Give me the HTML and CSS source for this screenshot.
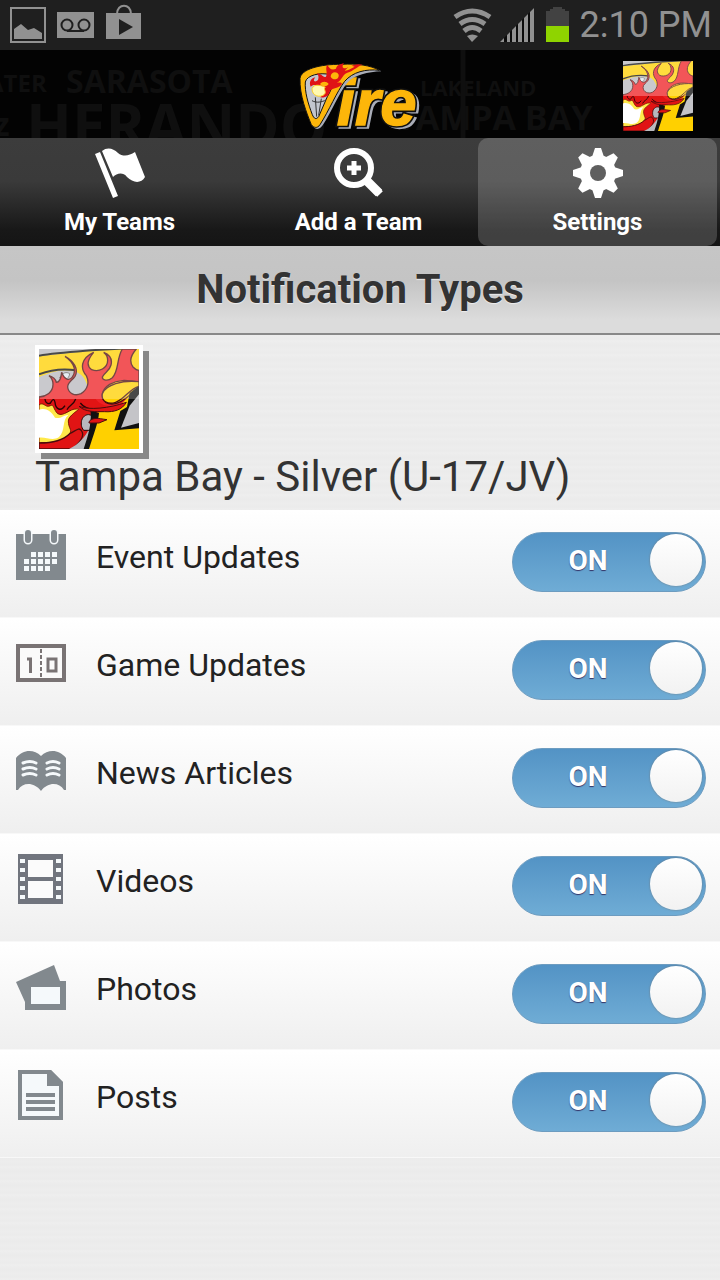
FILE: index.html
```html
<!DOCTYPE html>
<html lang="en">
<head>
    <meta charset="UTF-8">
    <meta name="viewport" content="width=device-width, initial-scale=1.0">
    <title>Notification Types</title>
    <link rel="stylesheet" href="styles.css">
</head>
<body>
    <!-- shared artwork -->
    <svg class="defs" width="0" height="0" aria-hidden="true">
        <symbol id="teamArt" viewBox="0 0 300 300">
            <rect width="300" height="300" fill="#b9b9be"/>
            <path d="M0 22 L150 5 L300 -4 V160 H150 C150 100 135 72 100 66 C60 60 30 72 0 84Z" fill="#ffd000"/>
            <path d="M0 20 C50 12 110 8 170 3 L300 -4 M0 76 C30 64 70 58 112 64" fill="none" stroke="#111" stroke-width="6"/>
            <path d="M62 86 C72 98 90 92 92 74 C82 68 72 70 62 86Z" fill="#dfe8ef" stroke="#333" stroke-width="2"/>
            <path d="M0 160 L0 144 C22 142 42 130 42 106 C42 94 38 86 30 80 C44 84 50 92 52 100 C60 100 66 92 68 70 C76 94 92 96 100 84 C112 68 108 42 78 22 C104 36 120 60 108 82 C98 96 86 100 86 114 C88 134 108 142 126 134 C146 122 152 100 142 80 C124 60 124 28 164 10 C144 34 142 50 158 62 C180 70 206 58 206 34 C206 22 200 14 194 10 C214 18 220 32 216 48 C212 66 196 70 190 84 C190 94 206 98 220 86 C240 66 232 30 250 0 L292 0 C276 18 270 38 282 54 C290 62 296 64 300 64 L300 100 C260 92 236 92 212 106 C184 124 186 146 200 160 C220 172 250 160 280 132 C272 160 250 184 216 188 C190 190 160 180 140 188 L130 172Z" fill="#ee2024" stroke="#4a0d0d" stroke-width="4"/>
            <path d="M300 98 C250 92 200 108 190 134 C186 156 206 168 230 160 C258 150 270 120 300 112Z" fill="#ffd000" stroke="#4a0d0d" stroke-width="4"/>
            <path d="M0 150 H170 C180 164 200 174 230 172 L170 210 L140 300 H0Z" fill="#e11414"/>
            <path d="M18 150 C20 166 34 168 38 156 C42 150 46 150 48 160 C50 182 66 188 78 170 M110 150 C104 168 90 168 84 182 M124 162 C134 176 150 182 174 184" fill="none" stroke="#2a0505" stroke-width="4"/>
            <path d="M0 168 C14 156 18 178 34 170 C44 164 44 182 56 194 C74 204 94 178 112 180 C136 176 88 196 88 216 C88 240 104 244 88 258 C60 292 24 276 0 282Z" fill="#ffe94a" stroke="#7c1600" stroke-width="3"/>
            <path d="M0 182 C20 176 36 186 48 206 C62 212 78 196 88 198 C68 214 80 246 60 264 C40 278 20 262 0 266Z" fill="#fff"/>
            <path d="M0 282 C30 282 70 276 92 254 C110 246 120 232 128 246 C138 262 122 280 100 300 H0Z" fill="#e11414" stroke="#4a0d0d" stroke-width="4"/>
            <path d="M90 300 C120 286 140 262 150 240 L158 196 L170 204 L144 300Z" fill="#b9b9be"/>
            <path d="M128 214 C132 200 146 192 158 200 L154 244 H134 C126 234 126 224 128 214Z" fill="#b9b9be" stroke="#2a0505" stroke-width="3"/>
            <path d="M300 112 L236 176 L170 192 L136 300 H300Z" fill="#ffd000"/>
            <path d="M154 184 C160 216 148 260 134 300 H150 C162 262 178 220 180 192Z" fill="#111"/>
            <path d="M272 132 L300 110 V238 L226 244 L244 186 L264 174Z" fill="#111"/>
            <path d="M300 136 L272 170 L246 236 L300 222Z" fill="#c4c4c8"/>
            <path d="M120 172 C150 184 210 178 262 160 C250 182 226 190 196 188 C170 188 140 190 120 172Z" fill="#e11414" stroke="#4a0d0d" stroke-width="3"/>
            <path d="M150 218 C162 204 176 208 204 212 L180 222 L150 222Z" fill="#e11414" stroke="#4a0d0d" stroke-width="3"/>
            <rect width="300" height="150" fill="#fff" opacity=".24"/>
        </symbol>
    </svg>

    <div class="statusBar">
        <svg class="statusIcons" width="150" height="50" viewBox="0 0 150 50" aria-hidden="true">
            <rect x="11" y="8" width="34" height="34" fill="none" stroke="#919191" stroke-width="2"/>
            <path d="M14 39 V29 L21 24 L28 30 L34 28 L42 33 V39Z" fill="#919191"/>
            <rect x="57" y="12" width="37" height="26" fill="#919191"/>
            <g fill="none" stroke="#1f1f1f" stroke-width="2">
                <circle cx="67" cy="25" r="5.500"/>
                <circle cx="84" cy="25" r="5.500"/>
                <path d="M67 31 H84"/>
            </g>
            <rect x="106" y="13" width="35" height="26" fill="#919191"/>
            <path d="M117 14 C117 3 131 3 131 14" fill="none" stroke="#919191" stroke-width="2"/>
            <path d="M119 19 L133 27 L119 35Z" fill="#1f1f1f"/>
        </svg>
        <div class="statusRight">
            <svg width="120" height="50" viewBox="450 0 120 50" aria-hidden="true">
                <g fill="none" stroke="#919191" stroke-width="5">
                    <path d="M455 17 Q472 5 490 17"/>
                    <path d="M460 24 Q472 15 485 24"/>
                    <path d="M464 31 Q472 24 481 31"/>
                </g>
                <path d="M467 36 Q472 33 478 36 L472 42Z" fill="#919191"/>
                <path d="M500 42 L534 8 V42Z" fill="#0b0b0b"/>
                <path d="M500 42 L504 38 V42Z M507 35 L510 32 V42 H507Z M512 30 L516 26 V42 H512Z M518 24 L522 20 V42 H518Z M524 18 L528 14 V42 H524Z M530 12 L534 8 V42 H530Z" fill="#919191"/>
                <path d="M546 11 H550 V9 H553 V7 H562 V9 H565 V11 H569 V26 H546Z" fill="#424242"/>
                <rect x="546" y="26" width="23" height="16" fill="#8fd400"/>
            </svg>
            <span class="clock">2:10 PM</span>
        </div>
    </div>

    <header class="banner">
        <!-- city names fading into the background -->
        <svg class="cities" viewBox="0 0 720 88" preserveAspectRatio="xMidYMid slice" aria-hidden="true">
            <g fill="#0f0f0f" font-family="Open Sans, sans-serif" font-weight="bold">
                <text x="-13" y="42" font-size="24">ATER</text>
                <text x="66" y="43" font-size="32">SARASOTA</text>
                <text x="-6" y="86" font-size="32">z</text>
                <text x="26" y="98" font-size="60">HERANDO</text>
                <text x="420" y="46" font-size="22">LAKELAND</text>
                <text x="396" y="80" font-size="34">TAMPA BAY</text>
            </g>
            <path d="M463 0 V88" stroke="#0f0f0f" stroke-width="5"/>
        </svg>
        <svg class="logo" width="124" height="68" viewBox="174 36 372 204" role="img" aria-label="Vire">
            <g font-family="Liberation Sans, sans-serif" font-size="196" font-weight="bold" font-style="italic">
                <text x="298" y="232" fill="#a9adb8" stroke="#a9adb8" stroke-width="10">ire</text>
                <text x="290" y="226" fill="none" stroke="#111" stroke-width="14">ire</text>
                <text x="290" y="226" fill="#fdb60a" stroke="#fdb60a" stroke-width="4">ire</text>
            </g>
            <path d="M186 90 C188 60 240 46 310 46 C360 42 400 50 424 64 C384 66 344 74 322 98 C296 130 276 184 248 226 C238 240 228 240 218 228 C204 190 184 134 186 90Z" fill="#a9adb8"/>
            <path d="M180 86 C182 58 240 42 304 43 C352 40 392 46 418 61 C378 56 338 66 314 94 C290 126 268 180 240 224 C232 236 222 234 214 224 C200 190 178 134 180 86Z" fill="#fdb60a" stroke="#111" stroke-width="3"/>
            <path d="M196 96 C200 76 240 66 270 74 C284 88 280 110 262 140 L236 200 C228 210 222 206 217 194 C204 160 194 126 196 96Z" fill="#c3c6ce" stroke="#111" stroke-width="3"/>
            <path d="M212 110 C206 98 212 84 226 82 C216 94 226 98 234 90 C238 80 234 74 230 70 C246 70 248 84 258 80 C264 66 254 56 262 44 C268 56 276 62 288 56 C290 46 300 42 312 40 C304 50 308 58 320 54 C340 44 350 40 368 44 C350 50 342 62 322 68 C304 76 308 90 290 98 C300 98 304 96 306 102 C294 118 280 112 270 122 C268 136 258 144 240 142 C252 132 248 120 236 110 C226 102 218 104 212 110Z" fill="#e01216"/>
            <path d="M272 80 C272 66 290 62 296 74 C298 88 280 94 272 80Z M314 62 C326 62 334 54 344 50 L330 46Z M240 102 C248 92 260 94 266 102 C260 110 248 112 240 102Z" fill="#fdb60a"/>
            <path d="M216 116 C222 100 244 106 256 112 C248 116 262 126 252 134 C238 144 216 138 216 116Z" fill="#fff9b0" stroke="#fdd12a" stroke-width="3"/>
            <path d="M216 152 C230 160 246 156 258 150 M226 142 L230 200 M244 146 L236 196" fill="none" stroke="#333" stroke-width="3"/>
        </svg>
        <svg class="avatar" width="70" height="70" role="img" aria-label="Team picture"><use href="#teamArt"/></svg>
    </header>

    <nav class="tabs">
        <a href="#teams" class="tab">
            <svg width="50" height="50" viewBox="0 0 50 50" aria-hidden="true">
                <path d="M0 6 L5 4 L23 48 L18 50Z M7 3 C12 -1 18 0 23 5 C28 9 34 8 40 4 L50 29 C46 36 38 35 32 29 C28 24 22 25 18 29Z" fill="#fff"/>
            </svg>
            <span>My Teams</span>
        </a>
        <a href="#add" class="tab">
            <svg width="50" height="50" viewBox="0 0 50 50" aria-hidden="true">
                <circle cx="20" cy="20" r="17" fill="none" stroke="#fff" stroke-width="6"/>
                <path d="M20 13 V27 M13 20 H27" stroke="#fff" stroke-width="5"/>
                <path d="M32 32 L45 45" stroke="#fff" stroke-width="9"/>
                <path d="M42 42 L46 46" stroke="#fff" stroke-width="8" stroke-linejoin="round"/>
            </svg>
            <span>Add a Team</span>
        </a>
        <a href="#settings" class="tab active" aria-current="page">
            <svg width="50" height="50" viewBox="-25 -25 50 50" aria-hidden="true">
                <g fill="#fff">
                    <path id="tooth" d="M-6 -16 L-3 -25 H3 L6 -16 V16 L3 25 H-3 L-6 16Z"/>
                    <use href="#tooth" transform="rotate(45)"/>
                    <use href="#tooth" transform="rotate(90)"/>
                    <use href="#tooth" transform="rotate(135)"/>
                    <circle r="18"/>
                </g>
                <circle r="8" fill="#5f5f5f"/>
            </svg>
            <span>Settings</span>
        </a>
    </nav>

    <h1 class="pageTitle">Notification Types</h1>

    <main>
        <section class="team">
            <svg class="teamPic" width="108" height="108" role="img" aria-label="Team picture"><use href="#teamArt"/></svg>
            <h2>Tampa Bay - Silver (U-17/JV)</h2>
        </section>

        <ul class="types">
            <li class="type">
                <svg width="50" height="50" viewBox="0 0 50 50" aria-hidden="true">
                    <path d="M0 4 H50 V50 H0Z" fill="#82898e"/>
                    <g fill="none" stroke-linecap="round">
                        <path d="M12 3 V10 M38 3 V10" stroke="#f5f9fb" stroke-width="9"/>
                        <path d="M12 3 V10 M38 3 V10" stroke="#82898e" stroke-width="6"/>
                    </g>
                    <path d="M15 24.500 H41 M8 31.500 H41 M8 38.500 H34" stroke="#f5f9fb" stroke-width="5" stroke-dasharray="5 2"/>
                </svg>
                <label for="events">Event Updates</label>
                <div class="toggle"><input type="checkbox" id="events" checked><span>ON</span></div>
            </li>
            <li class="type">
                <svg width="50" height="50" viewBox="0 0 50 50" aria-hidden="true">
                    <rect x="2" y="8" width="46" height="34" fill="#fafafa" stroke="#797374" stroke-width="4"/>
                    <path d="M25 11 V41" stroke="#797374" stroke-width="2" stroke-dasharray="4 2"/>
                    <path d="M11 21 H14.500 V35" fill="none" stroke="#797374" stroke-width="3"/>
                    <rect x="32" y="21" width="8" height="12" fill="none" stroke="#797374" stroke-width="3"/>
                </svg>
                <label for="games">Game Updates</label>
                <div class="toggle"><input type="checkbox" id="games" checked><span>ON</span></div>
            </li>
            <li class="type">
                <svg width="50" height="50" viewBox="0 0 50 50" aria-hidden="true">
                    <path d="M0 12 C7 3 18 3 25 10 C32 3 43 3 50 12 V44 H48 C43 36 32 36 25 45 C18 36 7 36 2 44 H0Z" fill="#82898e"/>
                    <path d="M7 17 Q14 14 20 17 M7 23 Q14 20 20 23 M7 29 Q14 26 20 29 M31 17 Q37 14 43 17 M31 23 Q37 20 43 23 M31 29 Q37 26 43 29" fill="none" stroke="#f5f9fb" stroke-width="3" stroke-linecap="round"/>
                </svg>
                <label for="news">News Articles</label>
                <div class="toggle"><input type="checkbox" id="news" checked><span>ON</span></div>
            </li>
            <li class="type">
                <svg width="50" height="50" viewBox="0 0 50 50" aria-hidden="true">
                    <path d="M2 0 H47 V50 H2Z" fill="#71757e"/>
                    <path d="M12 6 H37 V23 H12Z M12 27 H37 V44 H12Z" fill="#fbfbfb"/>
                    <path d="M6.500 5 V45 M42.500 5 V45" stroke="#f5f9fb" stroke-width="5" stroke-dasharray="4 5"/>
                </svg>
                <label for="videos">Videos</label>
                <div class="toggle"><input type="checkbox" id="videos" checked><span>ON</span></div>
            </li>
            <li class="type">
                <svg width="50" height="50" viewBox="0 0 50 50" aria-hidden="true">
                    <path d="M0 20 L38 3 L44 19 H50 V48 H9 V40Z" fill="#82898e"/>
                    <path d="M15 25 H44 V42 H15Z" fill="#f5f9fb"/>
                </svg>
                <label for="photos">Photos</label>
                <div class="toggle"><input type="checkbox" id="photos" checked><span>ON</span></div>
            </li>
            <li class="type">
                <svg width="50" height="50" viewBox="0 0 50 50" aria-hidden="true">
                    <path d="M4 2 H34 L45 13 V48 H4Z" fill="#f5f9fb" stroke="#82898e" stroke-width="4"/>
                    <path d="M31 0 H35 L47 12 V16 H31Z" fill="#82898e"/>
                    <path d="M10 25 H39 M10 32 H39 M10 39 H39" stroke="#82898e" stroke-width="4"/>
                </svg>
                <label for="posts">Posts</label>
                <div class="toggle"><input type="checkbox" id="posts" checked><span>ON</span></div>
            </li>
        </ul>
    </main>
</body>
</html>
```
FILE: styles.css
```css
* {
    margin: 0;
    padding: 0;
    box-sizing: border-box;
}

body {
    min-height: 100vh;
    font-family: Roboto, "Liberation Sans", sans-serif;
    color: #333;
    background: repeating-linear-gradient(#ededed 0px, #ebebeb 3px, #eeeeee 5px, #ebebeb 9px, #ededed 14px);
}

svg {
    display: block;
}

.defs {
    position: absolute;
}

/* phone status bar */
.statusBar {
    display: flex;
    justify-content: space-between;
    align-items: center;
    height: 50px;
    padding-right: 8px;
    background: #1f1f1f;
}

.statusRight {
    display: flex;
    align-items: center;
    gap: 10px;
}

.clock {
    color: #919191;
    font-size: 36px;
    line-height: 50px;
}

/* banner */
.banner {
    position: relative;
    display: grid;
    grid-template-columns: 1fr auto 1fr;
    align-items: center;
    height: 88px;
    padding: 4px 27px 0;
    background: #030303;
}

.cities {
    position: absolute;
    top: 0;
    left: 0;
    width: 100%;
    height: 100%;
}

.logo {
    position: relative;
    grid-column: 2;
}

.avatar {
    position: relative;
    justify-self: end;
}

/* tabs */
.tabs {
    display: grid;
    grid-template-columns: repeat(3, 1fr);
    height: 108px;
    padding-right: 3px;
    background: linear-gradient(#3c3c3c 0%, #3a3a3a 40%, #181818 85%, #151515 100%);
}

.tab {
    display: flex;
    flex-direction: column;
    align-items: center;
    gap: 8px;
    padding-top: 10px;
    color: #fff;
    font-size: 24px;
    font-weight: bold;
    line-height: 32px;
    text-decoration: none;
}

.tab.active {
    background: rgba(255, 255, 255, 0.18);
    border-radius: 10px;
}

.pageTitle {
    height: 89px;
    border-bottom: 2px solid #888;
    background: linear-gradient(#c6c6c6, #c4c4c4 40%, #dcdcdc 85%);
    font-size: 40px;
    line-height: 87px;
    text-align: center;
    text-shadow: 0 1px 1px #eee;
}

.team {
    padding: 10px 35px;
}

.teamPic {
    border: 4px solid #fff;
    box-shadow: 6px 6px 0 #888;
}

.team h2 {
    font-size: 42px;
    font-weight: normal;
    line-height: 47px;
}

/* notification list */
.types {
    list-style: none;
}

.type {
    display: flex;
    align-items: flex-start;
    height: 108px;
    padding: 19px 14px 0 16px;
    border-top: 1px solid #fff;
    border-bottom: 1px solid #f8f8f8;
    background: linear-gradient(#fff, #efefef);
}

.type label {
    flex: 1;
    padding-left: 30px;
    color: #222;
    font-size: 32px;
    line-height: 54px;
}

.toggle {
    display: grid;
    width: 194px;
    height: 60px;
    margin-top: 2px;
}

.toggle input,
.toggle span {
    grid-area: 1 / 1;
}

.toggle input {
    display: flex;
    justify-content: flex-end;
    align-items: center;
    padding: 0 3px 4px 0;
    appearance: none;
    border: 1px solid #6d9cc0;
    border-radius: 30px;
    background: linear-gradient(#5393c5, #6facd5);
    cursor: pointer;
}

.toggle input::after {
    content: "";
    width: 52px;
    height: 52px;
    border-radius: 50%;
    background: linear-gradient(#fff, #f2f2f2);
    box-shadow: 0 0 2px #777;
}

.toggle input:not(:checked) {
    justify-content: flex-start;
    background: #ccc;
}

.toggle span {
    padding-right: 42px;
    color: #fff;
    font-size: 28px;
    font-weight: bold;
    line-height: 58px;
    text-align: center;
    text-shadow: 0 1px 1px #336;
    pointer-events: none;
}
```
